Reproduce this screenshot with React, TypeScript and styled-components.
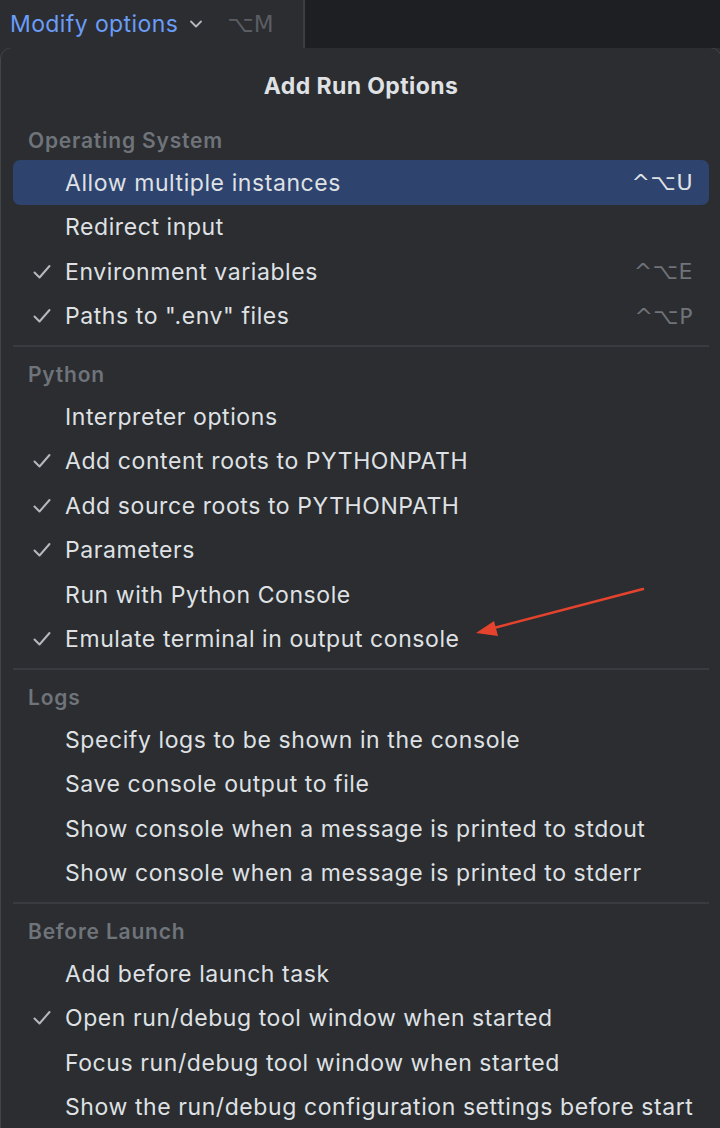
import React from "react";
import styled, { createGlobalStyle } from "styled-components";

const Global = createGlobalStyle`
  html, body { margin: 0; padding: 0; background: #2b2d30; }
  body { font-family: Inter, "Noto Sans", "DejaVu Sans", sans-serif; -webkit-font-smoothing: antialiased; }
  #root { width: 720px; height: 1128px; overflow: hidden; }
`;

const Page = styled.div`
  position: relative;
  width: 720px;
  height: 1128px;
  background: #2b2d30;
  overflow: hidden;
`;

const TopBar = styled.div`
  display: flex;
  height: 48px;
`;

const TopLeft = styled.div`
  width: 305px;
  display: flex;
  align-items: center;
  gap: 11px;
  padding-left: 10px;
  box-sizing: border-box;
  background: #2b2d30;
  border-right: 2px solid #3c3e43;
`;

const Link = styled.span`
  color: #6a9cf8;
  font-size: 23px;
  letter-spacing: 0.4px;
`;

const TopShortcut = styled.span`
  color: #5a5d63;
  font-size: 23px;
  margin-left: 13px;
  font-family: "DejaVu Sans", Inter, sans-serif;
`;

const TopRight = styled.div`
  flex: 1;
  background: #1e1f22;
`;

const Popup = styled.div`
  margin-top: -1px;
  margin-right: -2px;
  background: #2b2d30;
  border: 1px solid #43454a;
  border-radius: 12px 12px 0 0;
  padding: 0 12px 0 12px;
  height: 1100px;
`;

const Title = styled.div`
  height: 72px;
  padding-top: 26px;
  box-sizing: border-box;
  text-align: center;
  color: #dfe1e5;
  font-weight: 700;
  font-size: 23px;
  letter-spacing: 0.4px;
  line-height: 24px;
`;

const Header = styled.div`
  height: 40px;
  display: flex;
  align-items: center;
  padding-left: 15px;
  color: #6f737a;
  font-weight: 600;
  font-size: 21px;
  letter-spacing: 0.8px;
`;

const Row = styled.div<{ $selected?: boolean }>`
  height: 44.5px;
  display: flex;
  align-items: center;
  border-radius: 7px;
  background: ${(p) => (p.$selected ? "#2e436e" : "transparent")};
  color: #dfe1e5;
  font-size: 23px;
  letter-spacing: 0.58px;
  padding-right: 16px;
  padding-top: 1px;
  box-sizing: border-box;
  white-space: nowrap;
`;

const Check = styled.span`
  width: 52px;
  flex: none;
  padding-left: 20px;
  box-sizing: border-box;
  display: flex;
  align-items: center;
`;

const Label = styled.span`
  flex: 1;
  white-space: nowrap;
`;

const Shortcut = styled.span<{ $selected?: boolean }>`
  color: ${(p) => (p.$selected ? "#dfe1e5" : "#6f737a")};
  font-family: "DejaVu Sans", Inter, sans-serif;
  font-size: 22px;
  letter-spacing: 0.5px;
`;

const Separator = styled.div`
  height: 16px;
  display: flex;
  align-items: center;
  &::after {
    content: "";
    flex: 1;
    height: 2px;
    background: #393b40;
  }
`;

const ArrowSvg = styled.svg`
  position: absolute;
  left: 468px;
  top: 580px;
`;

const Chevron = () => (
  <svg width="14" height="10" viewBox="0 0 14 10">
    <polyline points="2,2.5 7,7.5 12,2.5" fill="none" stroke="#b4b8bf" strokeWidth="1.8" strokeLinecap="round" strokeLinejoin="round" />
  </svg>
);

const CheckMark = () => (
  <svg width="18" height="16" viewBox="0 0 18 16">
    <polyline points="1.5,8.5 6.5,13.5 16.5,2" fill="none" stroke="#b4b8bf" strokeWidth="2" strokeLinecap="round" strokeLinejoin="round" />
  </svg>
);

type Item = { label: string; checked?: boolean; shortcut?: string; selected?: boolean };
type Section = { title: string; items: Item[] };

const sections: Section[] = [
  {
    title: "Operating System",
    items: [
      { label: "Allow multiple instances", shortcut: "^⌥U", selected: true },
      { label: "Redirect input" },
      { label: "Environment variables", checked: true, shortcut: "^⌥E" },
      { label: 'Paths to ".env" files', checked: true, shortcut: "^⌥P" },
    ],
  },
  {
    title: "Python",
    items: [
      { label: "Interpreter options" },
      { label: "Add content roots to PYTHONPATH", checked: true },
      { label: "Add source roots to PYTHONPATH", checked: true },
      { label: "Parameters", checked: true },
      { label: "Run with Python Console" },
      { label: "Emulate terminal in output console", checked: true },
    ],
  },
  {
    title: "Logs",
    items: [
      { label: "Specify logs to be shown in the console" },
      { label: "Save console output to file" },
      { label: "Show console when a message is printed to stdout" },
      { label: "Show console when a message is printed to stderr" },
    ],
  },
  {
    title: "Before Launch",
    items: [
      { label: "Add before launch task" },
      { label: "Open run/debug tool window when started", checked: true },
      { label: "Focus run/debug tool window when started" },
      { label: "Show the run/debug configuration settings before start" },
    ],
  },
];

export default function App() {
  return (
    <Page>
      <Global />
      <TopBar>
        <TopLeft>
          <Link>Modify options</Link>
          <Chevron />
          <TopShortcut>⌥M</TopShortcut>
        </TopLeft>
        <TopRight />
      </TopBar>
      <Popup>
        <Title>Add Run Options</Title>
        {sections.map((s, si) => (
          <React.Fragment key={s.title}>
            {si > 0 && <Separator />}
            <Header>{s.title}</Header>
            {s.items.map((it) => (
              <Row key={it.label} $selected={it.selected}>
                <Check>{it.checked && <CheckMark />}</Check>
                <Label>{it.label}</Label>
                {it.shortcut && <Shortcut $selected={it.selected}>{it.shortcut}</Shortcut>}
              </Row>
            ))}
          </React.Fragment>
        ))}
      </Popup>
      <ArrowSvg width="180" height="60" viewBox="0 0 180 60">
        <line x1="175" y1="9" x2="22" y2="49" stroke="#e5432d" strokeWidth="2.5" strokeLinecap="round" />
        <polygon points="8,53 26,41 30,56" fill="#e5432d" />
      </ArrowSvg>
    </Page>
  );
}
